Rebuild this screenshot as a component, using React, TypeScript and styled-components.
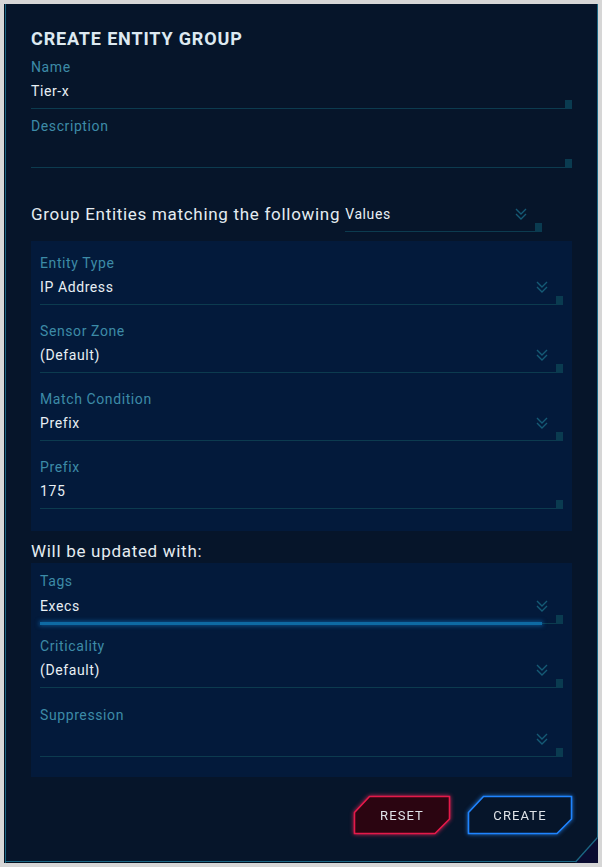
import React from "react";
import styled, { createGlobalStyle } from "styled-components";

const Global = createGlobalStyle`
  html, body { margin: 0; padding: 0; background: #d6d6d6; }
  body { font-family: Roboto, "Liberation Sans", sans-serif; }
  * { box-sizing: border-box; }
`;

const Panel = styled.div`
  position: relative;
  margin: 4px 4px 4px 4px;
  width: 594px;
  height: 859px;
  background: #06152a;
  padding: 24px 26px 0 27px;
  display: flex;
  flex-direction: column;
  box-shadow: inset 1px 0 0 #04101f, inset 2px 0 0 #1b6784, inset -1px 0 0 #1b6784,
    inset 0 -1px 0 #04101f, inset 0 -2px 0 #1b6784;
`;

const Title = styled.h1`
  margin: 0 0 8px;
  font-size: 18px;
  line-height: 22px;
  font-weight: 700;
  color: #dde9f1;
  letter-spacing: 0.85px;
`;

const FieldWrap = styled.div<{ $mt?: number }>`
  display: flex;
  flex-direction: column;
  flex: none;
  margin-top: ${(p) => p.$mt ?? 0}px;
`;

const Label = styled.div`
  font-size: 14px;
  line-height: 18px;
  color: #3d8ba7;
  letter-spacing: 0.6px;
`;

const Row = styled.div`
  display: flex;
  align-items: flex-end;
`;

const InputLine = styled.div<{ $pt?: number; $pb?: number }>`
  flex: 1;
  display: flex;
  align-items: center;
  padding: ${(p) => p.$pt ?? 6}px 0 ${(p) => p.$pb ?? 8}px;
  border-bottom: 1px solid #0c3b4f;
`;

const Value = styled.div`
  flex: 1;
  font-size: 14px;
  line-height: 18px;
  height: 18px;
  color: #e8eff4;
  letter-spacing: 0.6px;
`;

const EndCap = styled.div`
  width: 7px;
  height: 9px;
  background: #0a3b50;
`;

const ChevronBox = styled.svg`
  width: 12px;
  height: 13px;
  margin-right: 8px;
  flex: none;
`;

const Glow = styled.div`
  height: 3px;
  margin: -2px 21px -5px 0;
  background: #0e6aa3;
  box-shadow: 0 0 4px 1px rgba(16, 120, 200, 0.55);
  position: relative;
`;

const Chevron = () => (
  <ChevronBox viewBox="0 0 12 13">
    <polyline points="1,1 6,6 11,1" fill="none" stroke="#155a75" strokeWidth="1.4" />
    <polyline points="1,6 6,11 11,6" fill="none" stroke="#155a75" strokeWidth="1.4" />
  </ChevronBox>
);

type FieldProps = {
  label: string;
  value?: string;
  chevron?: boolean;
  glow?: boolean;
  mt?: number;
  pt?: number;
};

const Field = ({ label, value, chevron, glow, mt, pt }: FieldProps) => (
  <FieldWrap $mt={mt}>
    <Label>{label}</Label>
    <Row>
      <InputLine $pt={pt}>
        <Value>{value}</Value>
        {chevron && <Chevron />}
      </InputLine>
      <EndCap />
    </Row>
    {glow && <Glow />}
  </FieldWrap>
);

const GroupRow = styled.div`
  display: flex;
  align-items: flex-start;
  flex: none;
  margin-top: 35px;
`;

const Heading = styled.div<{ $mt?: number }>`
  font-size: 17px;
  line-height: 22px;
  color: #e4ecf1;
  letter-spacing: 0.7px;
  flex: none;
  margin-top: ${(p) => p.$mt ?? 0}px;
`;

const SelectWrap = styled.div`
  width: 197px;
  margin-left: 5px;
`;

const Box = styled.div<{ $pt: number; $pb: number; $mt: number }>`
  margin-top: ${(p) => p.$mt}px;
  background: #031a3b;
  padding: ${(p) => p.$pt}px 9px ${(p) => p.$pb}px 9px;
  display: flex;
  flex-direction: column;
  flex: none;
`;

const Actions = styled.div`
  margin-top: 19px;
  display: flex;
  justify-content: flex-end;
  gap: 18px;
  flex: none;
`;

const Btn = styled.button<{ $w: number; $glow: string }>`
  position: relative;
  width: ${(p) => p.$w}px;
  height: 38px;
  padding: 0;
  border: none;
  background: transparent;
  font-family: Roboto, "Liberation Sans", sans-serif;
  font-size: 13px;
  font-weight: 400;
  letter-spacing: 1.1px;
  color: #dfe3e8;
  display: flex;
  align-items: center;
  justify-content: center;
  overflow: visible;
  filter: drop-shadow(0 0 2px ${(p) => p.$glow});
`;

const BtnShape = styled.svg`
  position: absolute;
  inset: 0;
  overflow: visible;
`;

const BtnText = styled.span`
  position: relative;
`;

const Button = ({
  label,
  w,
  stroke,
  fill,
  glow,
}: {
  label: string;
  w: number;
  stroke: string;
  fill: string;
  glow: string;
}) => {
  const pts = `15.5,0.5 ${w - 0.5},0.5 ${w - 0.5},23 ${w - 15},37.5 0.5,37.5 0.5,16.5`;
  return (
    <Btn $w={w} $glow={glow}>
      <BtnShape width={w} height={38} viewBox={`0 0 ${w} 38`}>
        <polygon points={pts} fill={fill} stroke={stroke} strokeWidth="1.6" />
      </BtnShape>
      <BtnText>{label}</BtnText>
    </Btn>
  );
};

const Corner = styled.svg`
  position: absolute;
  right: 0;
  bottom: 0;
`;

export default function App() {
  return (
    <>
      <Global />
      <Panel>
        <Title>CREATE ENTITY GROUP</Title>
        <Field label="Name" value="Tier-x" />
        <Field label="Description" value="" mt={8} />
        <GroupRow>
          <Heading>Group Entities matching the following</Heading>
          <SelectWrap>
            <Row>
              <InputLine $pt={2}>
                <Value>Values</Value>
                <Chevron />
              </InputLine>
              <EndCap />
            </Row>
          </SelectWrap>
        </GroupRow>
        <Box $mt={9} $pt={13} $pb={22}>
          <Field label="Entity Type" value="IP Address" chevron />
          <Field label="Sensor Zone" value="(Default)" chevron mt={17} />
          <Field label="Match Condition" value="Prefix" chevron mt={17} />
          <Field label="Prefix" value="175" mt={17} />
        </Box>
        <Heading $mt={9}>Will be updated with:</Heading>
        <Box $mt={1} $pt={9} $pb={20}>
          <Field label="Tags" value="Execs" chevron glow pt={7} />
          <Field label="Criticality" value="(Default)" chevron mt={17} />
          <Field label="Suppression" value="" chevron mt={18} />
        </Box>
        <Actions>
          <Button label="RESET" w={96} stroke="#e5194a" fill="#2b0511" glow="rgba(255,40,90,0.8)" />
          <Button label="CREATE" w={104} stroke="#1f84ff" fill="#06152a" glow="rgba(40,140,255,0.8)" />
        </Actions>
        <Corner width="23" height="26" viewBox="0 0 23 26">
          <polygon points="23,0 23,26 0,26" fill="#0a0c31" />
          <line x1="22.5" y1="0.5" x2="0.5" y2="25" stroke="#1b6784" strokeWidth="1.3" />
        </Corner>
      </Panel>
    </>
  );
}
